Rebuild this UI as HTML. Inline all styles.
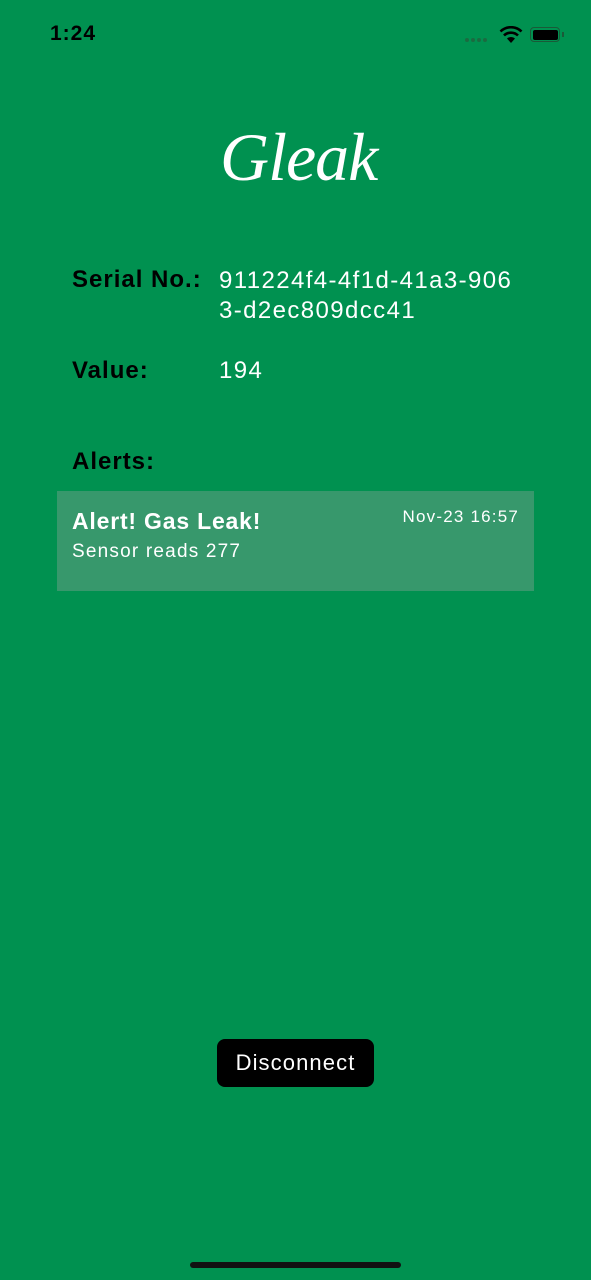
<!DOCTYPE html>
<html><head><meta charset="utf-8"><style>
body{margin:0;width:591px;height:1280px;background:#009150;font-family:"Liberation Sans",sans-serif;position:relative;overflow:hidden}
.a{position:absolute;white-space:nowrap}
</style></head><body>
<div class="a" style="left:50px;top:22px;font-size:21px;font-weight:bold;color:#000;letter-spacing:1px">1:24</div>
<div class="a" style="left:465px;top:38px;display:flex;gap:2px"><span style="width:4px;height:4px;border-radius:2px;background:#1a6b40"></span><span style="width:4px;height:4px;border-radius:2px;background:#1a6b40"></span><span style="width:4px;height:4px;border-radius:2px;background:#1a6b40"></span><span style="width:4px;height:4px;border-radius:2px;background:#1a6b40"></span></div>
<svg class="a" style="left:499px;top:26px" width="24" height="18" viewBox="0 0 24 18"><path d="M12 17 L8 12.5 A6 6 0 0 1 16 12.5Z" fill="#000"/><path d="M5 9.5 A10 10 0 0 1 19 9.5" stroke="#000" stroke-width="2.6" fill="none"/><path d="M1.5 5.5 A15 15 0 0 1 22.5 5.5" stroke="#000" stroke-width="2.6" fill="none"/></svg>
<div class="a" style="left:530px;top:27px;width:30px;height:15px;border:1px solid #1a5a38;border-radius:4px;box-sizing:border-box;padding:1.5px"><div style="width:100%;height:100%;background:#000;border-radius:2px"></div></div>
<div class="a" style="left:562px;top:32px;width:2px;height:5px;background:#1a5a38"></div>
<div class="a" style="left:220px;top:118px;font-family:'Liberation Serif',serif;font-style:italic;font-size:68px;color:#fff;letter-spacing:-1px">Gleak</div>
<div class="a" style="left:72px;top:266px;font-size:24px;font-weight:bold;color:#000;letter-spacing:1px">Serial No.:</div>
<div class="a" style="left:219px;top:266px;font-size:24px;color:#fff;line-height:30px;letter-spacing:1.4px">911224f4-4f1d-41a3-906<br>3-d2ec809dcc41</div>
<div class="a" style="left:72px;top:357px;font-size:24px;font-weight:bold;color:#000;letter-spacing:1px">Value:</div>
<div class="a" style="left:219px;top:357px;font-size:24px;color:#fff;letter-spacing:1.4px">194</div>
<div class="a" style="left:72px;top:448px;font-size:24px;font-weight:bold;color:#000;letter-spacing:1px">Alerts:</div>
<div class="a" style="left:57px;top:491px;width:477px;height:100px;background:#37986c"></div>
<div class="a" style="left:72px;top:508px;font-size:23px;font-weight:bold;color:#fff;letter-spacing:0.8px">Alert! Gas Leak!</div>
<div class="a" style="left:72px;top:541px;font-size:19px;color:#fff;letter-spacing:1.2px">Sensor reads 277</div>
<div class="a" style="right:72px;top:507px;font-size:17px;color:#fff;letter-spacing:1.2px">Nov-23 16:57</div>
<div class="a" style="left:217px;top:1039px;width:157px;height:48px;background:#000;border-radius:8px;color:#fff;font-size:22px;line-height:48px;text-align:center;letter-spacing:1.1px">Disconnect</div>
<div class="a" style="left:190px;top:1262px;width:211px;height:6px;background:#111;border-radius:3px"></div>
</body></html>
